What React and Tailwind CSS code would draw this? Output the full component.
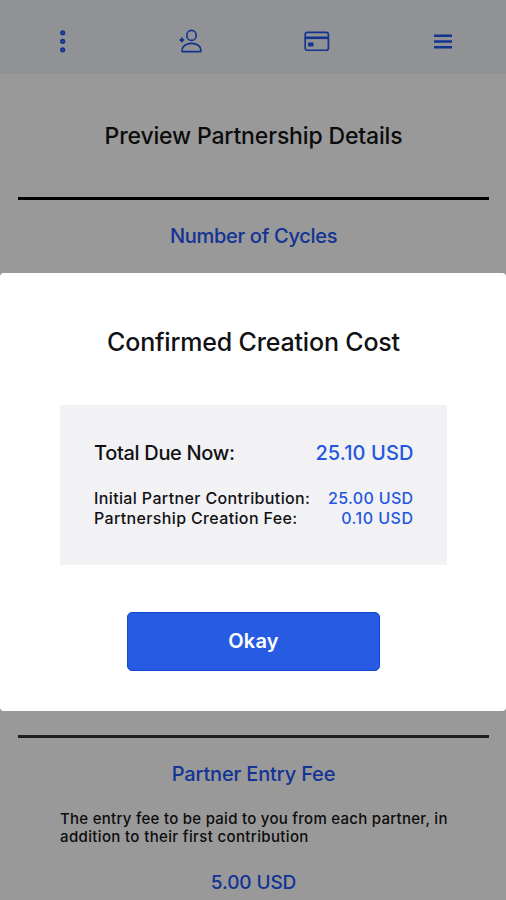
function DotsIcon() {
  return (
    <svg width="8" height="24" viewBox="0 0 8 24" fill="currentColor">
      <circle cx="3.7" cy="3.8" r="2.6" />
      <circle cx="3.7" cy="12.3" r="2.6" />
      <circle cx="3.7" cy="20.8" r="2.6" />
      <g fill="#8a9de0">
        <circle cx="3.9" cy="4" r="0.7" />
        <circle cx="3.9" cy="12.5" r="0.7" />
        <circle cx="3.9" cy="21" r="0.7" />
      </g>
    </svg>
  );
}

function PersonAddIcon() {
  return (
    <svg width="24" height="24" viewBox="0 0 24 24" fill="none" stroke="currentColor" strokeWidth="1.6" strokeLinejoin="round">
      <ellipse cx="12.5" cy="6.4" rx="4.7" ry="5" />
      <path d="M3.1 22.6v-1.5c0-4 4.2-6.7 9.4-6.7s9.4 2.7 9.4 6.7v1.5z" />
      <path d="M2.9 8.6v4.6M0.6 10.9h4.6" strokeWidth="2" />
    </svg>
  );
}

function CardIcon() {
  return (
    <svg width="26" height="20" viewBox="0 0 26 20" fill="none" stroke="currentColor">
      <rect x="1.2" y="1.4" width="23.2" height="18" rx="2.2" strokeWidth="1.7" />
      <path d="M1.2 6.8h23.2" strokeWidth="2.6" />
      <rect x="4.1" y="11.4" width="5.4" height="4" rx="0.6" fill="currentColor" stroke="none" />
    </svg>
  );
}

function MenuIcon() {
  return (
    <svg width="20" height="16" viewBox="0 0 20 16" fill="none" stroke="currentColor" strokeWidth="2.4">
      <path d="M1 2.7h18M1 8.5h18M1 14.2h18" />
    </svg>
  );
}

function SectionTitle({ children, className }) {
  return <h2 className={`text-center leading-6 whitespace-nowrap text-[#2155f8] ${className}`}>{children}</h2>;
}

function CostRow({ label, value, labelClass, valueClass }) {
  return (
    <div className="flex items-center justify-between whitespace-nowrap">
      <span className={labelClass}>{label}</span>
      <span className={`text-[#2257e0] ${valueClass}`}>{value}</span>
    </div>
  );
}

export default function App() {
  return (
    <div className="relative h-[900px] w-[506px] overflow-hidden bg-white font-['Inter','Liberation_Sans',sans-serif] font-medium text-[#111114]">
      <header className="flex h-[74px] items-center bg-[#f0f3f9] pt-2 text-[#2155f0]">
        <div className="ml-[59px] w-[120px]"><DotsIcon /></div>
        <div className="w-[125px]"><PersonAddIcon /></div>
        <div className="w-[129px]"><CardIcon /></div>
        <MenuIcon />
      </header>
      <main className="flex h-[826px] flex-col justify-between text-[#141414]">
        <section>
          <h1 className="pt-[46px] pl-px text-center text-[23px] leading-8 tracking-[-0.16px] whitespace-nowrap">Preview Partnership Details</h1>
          <hr className="mr-[17px] ml-[18px] mt-[45px] border-t-[3px] border-black" />
          <SectionTitle className="mt-6 pl-px text-[20px] tracking-[-0.3px]">Number of Cycles</SectionTitle>
        </section>
        <section className="h-[165px]">
          <hr className="mr-[17px] ml-[18px] border-t-[3px] border-[#333]" />
          <SectionTitle className="mt-6 pl-px text-[20px] tracking-[-0.15px]">Partner Entry Fee</SectionTitle>
          <p className="mt-6 ml-[60px] flex flex-col text-[15px] whitespace-nowrap">
            <span className="leading-[18px] tracking-[0.27px]">The entry fee to be paid to you from each partner, in</span>
            <span className="leading-[18px] tracking-[0.36px]">addition to their first contribution</span>
          </p>
          <p className="mt-[25px] pl-px text-center text-[19px] leading-6 tracking-[-0.1px] text-[#2155f8]">5.00 USD</p>
        </section>
      </main>
      <div className="absolute inset-0 flex flex-col bg-black/40 pt-[273px]">
        <section role="dialog" className="flex h-[438px] flex-col items-center rounded-[4px] bg-white">
          <h2 className="mt-[53px] pl-px text-[25px] leading-8 tracking-[-0.18px] whitespace-nowrap">Confirmed Creation Cost</h2>
          <div className="mt-[47px] h-[160px] w-[387px] bg-[#f2f2f4] pt-[34px] pr-[33px] pl-[34.5px]">
            <CostRow label="Total Due Now:" value="25.10 USD" labelClass="text-[20px] leading-7 tracking-[-0.32px]" valueClass="text-[20px] leading-7 tracking-[0.1px]" />
            <div className="mt-[21px]">
              <CostRow label="Initial Partner Contribution:" value="25.00 USD" labelClass="text-[16px] leading-5 tracking-[0.37px]" valueClass="text-[16px] leading-5 tracking-[0.35px]" />
              <CostRow label="Partnership Creation Fee:" value="0.10 USD" labelClass="text-[16px] leading-5 tracking-[0.35px]" valueClass="text-[16px] leading-5 tracking-[0.5px]" />
            </div>
          </div>
          <button className="mt-[47px] ml-px h-[59px] w-[253px] rounded-[5px] border border-[#1049d6] bg-[#275be2] pb-px text-[20px] font-semibold tracking-[0.2px] text-white">Okay</button>
        </section>
      </div>
    </div>
  );
}
